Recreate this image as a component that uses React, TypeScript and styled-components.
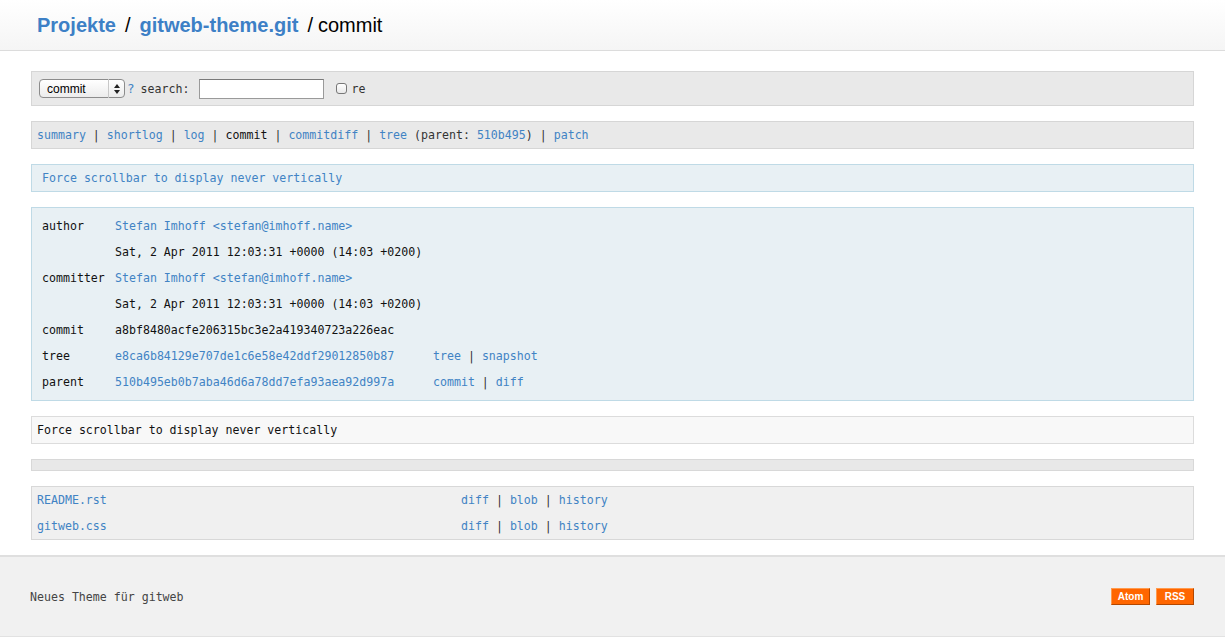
import React from "react";
import styled, { createGlobalStyle } from "styled-components";

const Global = createGlobalStyle`
  html, body { margin: 0; padding: 0; background: #fff; }
  body { font-family: "DejaVu Sans Mono", monospace; font-size: 11.6px; color: #111; }
  a { color: #4183c4; text-decoration: none; }
`;

const Page = styled.div`
  display: flex;
  flex-direction: column;
  min-height: 638px;
`;

const Header = styled.header`
  height: 50px;
  border-bottom: 1px solid #dcdcdc;
  background: linear-gradient(#ffffff, #f5f5f5);
  display: flex;
  align-items: center;
  padding: 0 37px;
  font-family: "Liberation Sans", Arial, sans-serif;
  font-size: 20px;
  color: #000;
`;

const HeaderLink = styled.a`
  color: #3d80c6;
  font-weight: bold;
`;

const Slash = styled.span<{ $right?: number }>`
  margin: 0 ${(p) => p.$right ?? 9}px 0 9px;
`;

const Main = styled.main`
  display: flex;
  flex-direction: column;
  gap: 15px;
  padding: 20px 31px 15px;
`;

const Box = styled.div<{ $bg: string; $border: string; $h?: number }>`
  box-sizing: border-box;
  background: ${(p) => p.$bg};
  border: 1px solid ${(p) => p.$border};
  padding: 0 5px;
  ${(p) => (p.$h ? `height: ${p.$h}px;` : "")}
`;

const SearchBar = styled(Box)`
  display: flex;
  align-items: center;
  padding-left: 7px;
`;

const SelectWrap = styled.div`
  position: relative;
  width: 86px;
  height: 19px;
`;

const Select = styled.select`
  appearance: none;
  width: 100%;
  height: 100%;
  box-sizing: border-box;
  border: 1px solid #8c8c8c;
  border-radius: 4px;
  background: linear-gradient(#ffffff, #ececec);
  font-family: "Liberation Sans", Arial, sans-serif;
  font-size: 12px;
  padding: 0 0 0 7px;
  color: #000;
`;

const SelectArrow = styled.div`
  position: absolute;
  right: 0;
  top: 0;
  width: 16px;
  height: 19px;
  border-left: 1px solid #c8c8c8;
  display: flex;
  align-items: center;
  justify-content: center;
  pointer-events: none;
`;

const Help = styled.a`
  margin-left: 2px;
  font-size: 12.5px;
`;

const Label = styled.span`
  margin-left: 6px;
  color: #333;
`;

const SearchInput = styled.input`
  box-sizing: border-box;
  width: 125px;
  height: 20px;
  margin-left: 10px;
  border: 1px solid #9a9a9a;
  border-top-color: #7a7a7a;
  background: #fff;
`;

const Check = styled.span`
  display: inline-block;
  box-sizing: border-box;
  width: 11px;
  height: 11px;
  border: 1px solid #777;
  border-radius: 3px;
  background: linear-gradient(#fff, #e8e8e8);
  margin-left: 12px;
`;

const CheckLabel = styled.span`
  margin-left: 4px;
  color: #333;
`;

const NavBar = styled(Box)`
  display: flex;
  align-items: center;
  white-space: pre;
`;

const Sep = styled.span`
  color: #333;
`;

const Title = styled(Box)`
  display: flex;
  align-items: center;
  padding-left: 10px;
`;

const InfoBox = styled(Box)`
  padding: 5px 10px;
  display: grid;
  grid-template-columns: 73px 318px 1fr;
  grid-auto-rows: 26px;
  align-items: center;
`;

const Wide = styled.div`
  grid-column: 2 / 4;
`;

const Msg = styled(Box)`
  display: flex;
  align-items: center;
`;

const Files = styled(Box)`
  display: grid;
  grid-template-columns: 424px 1fr;
  grid-auto-rows: 26px;
  align-items: center;
`;

const Footer = styled.footer`
  height: 79px;
  background: #f1f1f1;
  border-top: 2px solid #dfdfdf;
  border-bottom: 1px solid #e2e2e2;
  display: flex;
  align-items: center;
  justify-content: space-between;
  padding: 0 31px 0 30px;
  color: #444;
`;

const Feeds = styled.div`
  display: flex;
  gap: 6px;
`;

const FeedButton = styled.a<{ $w: number }>`
  box-sizing: border-box;
  width: ${(p) => p.$w}px;
  height: 17px;
  background: #ff6600;
  border: 1px solid;
  border-color: #ff9a4d #b34700 #b34700 #ff9a4d;
  color: #fff;
  font-family: "Liberation Sans", Arial, sans-serif;
  font-weight: bold;
  font-size: 10px;
  display: flex;
  align-items: center;
  justify-content: center;
`;

const Bars = () => <Sep> | </Sep>;

export default function App() {
  return (
    <Page>
      <Global />
      <Header>
        <HeaderLink>Projekte</HeaderLink>
        <Slash>/</Slash>
        <HeaderLink>gitweb-theme.git</HeaderLink>
        <Slash $right={5}>/</Slash>
        <span>commit</span>
      </Header>
      <Main>
        <SearchBar $bg="#e9e9e9" $border="#d6d6d6" $h={35}>
          <SelectWrap>
            <Select defaultValue="commit">
              <option value="commit">commit</option>
            </Select>
            <SelectArrow>
              <svg width="6" height="10" viewBox="0 0 6 10">
                <path d="M0 4 L3 0 L6 4 Z" fill="#222" />
                <path d="M0 6 L3 10 L6 6 Z" fill="#222" />
              </svg>
            </SelectArrow>
          </SelectWrap>
          <Help>?</Help>
          <Label>search:</Label>
          <SearchInput />
          <Check />
          <CheckLabel>re</CheckLabel>
        </SearchBar>
        <NavBar $bg="#e9e9e9" $border="#d6d6d6" $h={28}>
          <a>summary</a>
          <Bars />
          <a>shortlog</a>
          <Bars />
          <a>log</a>
          <Bars />
          <span>commit</span>
          <Bars />
          <a>commitdiff</a>
          <Bars />
          <a>tree</a>
          <Sep> (parent: </Sep>
          <a>510b495</a>
          <Sep>)</Sep>
          <Bars />
          <a>patch</a>
        </NavBar>
        <Title $bg="#e8f0f4" $border="#bfdae6" $h={28}>
          <a>Force scrollbar to display never vertically</a>
        </Title>
        <InfoBox $bg="#e8f0f4" $border="#bfdae6">
          <span>author</span>
          <Wide>
            <a>Stefan Imhoff &lt;stefan@imhoff.name&gt;</a>
          </Wide>
          <span />
          <Wide>Sat, 2 Apr 2011 12:03:31 +0000 (14:03 +0200)</Wide>
          <span>committer</span>
          <Wide>
            <a>Stefan Imhoff &lt;stefan@imhoff.name&gt;</a>
          </Wide>
          <span />
          <Wide>Sat, 2 Apr 2011 12:03:31 +0000 (14:03 +0200)</Wide>
          <span>commit</span>
          <Wide>a8bf8480acfe206315bc3e2a419340723a226eac</Wide>
          <span>tree</span>
          <a>e8ca6b84129e707de1c6e58e42ddf29012850b87</a>
          <span>
            <a>tree</a>
            <Bars />
            <a>snapshot</a>
          </span>
          <span>parent</span>
          <a>510b495eb0b7aba46d6a78dd7efa93aea92d997a</a>
          <span>
            <a>commit</a>
            <Bars />
            <a>diff</a>
          </span>
        </InfoBox>
        <Msg $bg="#f8f8f8" $border="#dcdcdc" $h={28}>
          Force scrollbar to display never vertically
        </Msg>
        <Box $bg="#e8e8e8" $border="#d8d8d8" $h={12} />
        <Files $bg="#f0f0f0" $border="#d8d8d8">
          <a>README.rst</a>
          <span>
            <a>diff</a>
            <Bars />
            <a>blob</a>
            <Bars />
            <a>history</a>
          </span>
          <a>gitweb.css</a>
          <span>
            <a>diff</a>
            <Bars />
            <a>blob</a>
            <Bars />
            <a>history</a>
          </span>
        </Files>
      </Main>
      <Footer>
        <span>Neues Theme für gitweb</span>
        <Feeds>
          <FeedButton $w={39}>Atom</FeedButton>
          <FeedButton $w={38}>RSS</FeedButton>
        </Feeds>
      </Footer>
    </Page>
  );
}
